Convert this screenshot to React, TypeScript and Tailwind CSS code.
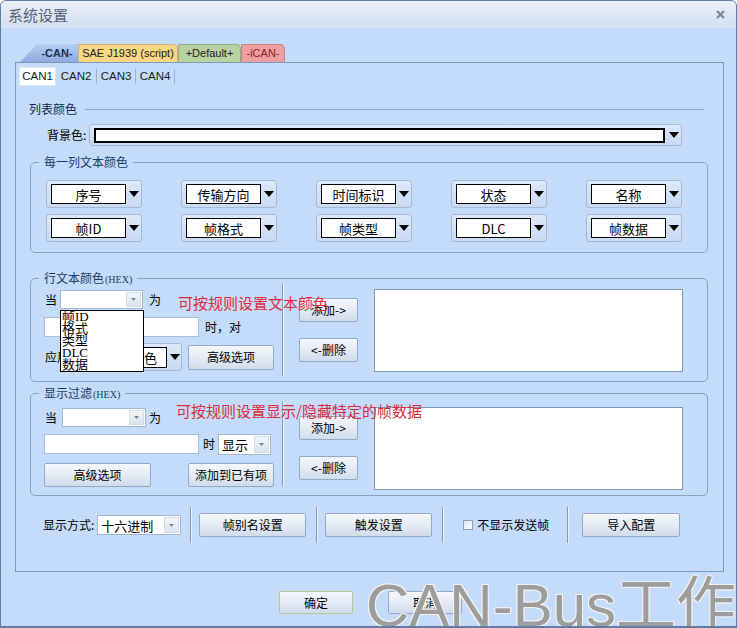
import React from "react";

function Arrow({ w = 10, h = 6, color = "#000" }: { w?: number; h?: number; color?: string }) {
  return (
    <svg width={w} height={h} viewBox={`0 0 ${w} ${h}`} className="shrink-0">
      <polygon points={`0,0 ${w},0 ${w / 2},${h}`} fill={color} />
    </svg>
  );
}

function Btn({ className = "", children }: { className?: string; children: React.ReactNode }) {
  return (
    <div
      className={`shrink-0 flex items-center justify-center border border-[#93aac7] rounded-[2px] bg-gradient-to-b from-[#f5f8fc] via-[#e4ebf4] to-[#d0dcec] text-[12px] leading-none text-black whitespace-nowrap ${className}`}
    >
      {children}
    </div>
  );
}

function ColorBtn({ label, className = "" }: { label: string; className?: string }) {
  return (
    <div
      className={`shrink-0 flex items-center h-[28px] w-[96px] border border-[#a6bad5] rounded-[3px] bg-gradient-to-b from-[#dde9f8] to-[#c8daf2] pl-[4px] ${className}`}
    >
      <div className="w-[75px] h-[20px] bg-white border border-black flex items-center justify-center text-[13px] leading-none">
        {label}
      </div>
      <div className="ml-[3px]">
        <Arrow w={10} h={6} />
      </div>
    </div>
  );
}

function Combo({ className = "", text = "" }: { className?: string; text?: string }) {
  return (
    <div className={`shrink-0 flex bg-white border border-[#a3b7d1] ${className}`}>
      <div className="flex-1 flex items-center pl-[3px] text-[13px] leading-none whitespace-nowrap overflow-hidden">{text}</div>
      <div className="w-[15px] m-[1px] flex items-center justify-center bg-gradient-to-b from-[#f3f6fa] to-[#d9e2ee] border border-[#d3dde9]">
        <Arrow w={5} h={3} color="#7d8796" />
      </div>
    </div>
  );
}

function Group({ title, hex, className = "", children }: { title: string; hex?: boolean; className?: string; children?: React.ReactNode }) {
  return (
    <div className={`relative shrink-0 ml-[14px] w-[678px] border border-[#8aa3c4] rounded-[5px] ${className}`}>
      <span className="absolute -top-[9px] left-[8px] px-[5px] bg-[#c4dcf9] text-[12px] leading-[16px] text-[#173a66] whitespace-nowrap">
        {title}
        {hex && <span className="font-['Liberation_Serif',serif] text-[10px] ml-[1px]">(HEX)</span>}
      </span>
      {children}
    </div>
  );
}

function VSep({ className = "" }: { className?: string }) {
  return <div className={`shrink-0 w-[2px] border-l border-[#8397b4] border-r border-r-[#e9f1fb] ${className}`} />;
}

function ListBox({ className = "" }: { className?: string }) {
  return <div className={`shrink-0 w-[309px] h-[83px] bg-white border border-[#7f98b8] ${className}`} />;
}

export default function App() {
  return (
    <div className="relative w-[737px] h-[628px] overflow-hidden bg-[#c4dcf9] border-x border-t border-b-2 border-[#5f7ea6] rounded-t-[6px] font-['Noto_Sans_CJK_SC',sans-serif] text-[12px] text-black">
      {/* Title bar */}
      <div className="h-[27px] flex items-center justify-between pl-[7px] pr-[11px] bg-gradient-to-b from-[#ebf0f8] to-[#d3dff0] border-b border-[#dde7f3]">
        <span className="text-[15px] leading-none text-[#56637a]">系统设置</span>
        <svg width="9" height="9" viewBox="0 0 9 9">
          <path d="M1 1L8 8M8 1L1 8" stroke="#75839a" strokeWidth="2" />
        </svg>
      </div>

      {/* Top tabs */}
      <div className="mt-[16px] ml-[19px] h-[18px] flex items-end font-['Liberation_Sans',sans-serif] text-[11px] leading-none">
        <div className="w-[58px] h-[18px] flex items-center justify-center pl-[16px] bg-gradient-to-b from-[#b6cff2] to-[#8cacdf] font-bold text-[#1b2d57] [clip-path:polygon(17px_0,100%_0,100%_100%,0_100%)]">
          -CAN-
        </div>
        <div className="w-[100px] h-[18px] flex items-center justify-center bg-[#f7d786] border border-b-0 border-[#cfb375] rounded-tr-[5px] text-[#222]">
          SAE J1939 (script)
        </div>
        <div className="w-[63px] h-[18px] flex items-center justify-center bg-[#b8d2a0] border border-b-0 border-[#93b07e] rounded-tr-[5px] text-[#222]">
          +Default+
        </div>
        <div className="w-[44px] h-[18px] flex items-center justify-center bg-[#eca0a2] border border-b-0 border-[#c98184] rounded-tr-[5px] text-[#8c1c20]">
          -iCAN-
        </div>
      </div>

      {/* Panel */}
      <div className="ml-[14px] w-[709px] h-[510px] border border-[#7b98c0] flex flex-col">
        {/* Sub tabs */}
        <div className="mt-[4px] ml-[3px] h-[19px] flex items-center font-['Liberation_Sans',sans-serif] text-[11.5px] leading-none text-[#1a1a1a]">
          <div className="w-[37px] h-[19px] bg-white border border-[#dfe7f1] flex items-center justify-center">CAN1</div>
          <div className="w-[40px] text-center">CAN2</div>
          <div className="w-px h-[15px] bg-[#9db1cb]" />
          <div className="w-[38px] text-center">CAN3</div>
          <div className="w-px h-[15px] bg-[#9db1cb]" />
          <div className="w-[38px] text-center">CAN4</div>
          <div className="w-px h-[15px] bg-[#9db1cb]" />
        </div>

        {/* 列表颜色 */}
        <div className="mt-[15px] h-[16px] flex items-center pl-[13px]">
          <span className="text-[12px] leading-none text-[#14294a]">列表颜色</span>
          <div className="flex-1 h-px bg-[#8ea8c5] ml-[8px] mr-[19px]" />
        </div>

        {/* 背景色 */}
        <div className="mt-[7px] h-[22px] flex items-center pl-[31px]">
          <span className="text-[12px] leading-none">背景色:</span>
          <div className="ml-[3px] w-[593px] h-[22px] flex items-center pl-[4px] border border-[#a6bad5] rounded-[3px] bg-gradient-to-b from-[#dde9f8] to-[#c8daf2]">
            <div className="w-[571px] h-[15px] bg-white border-2 border-black" />
            <div className="ml-[4px]">
              <Arrow w={10} h={6} />
            </div>
          </div>
        </div>

        {/* 每一列文本颜色 */}
        <Group title="每一列文本颜色" className="mt-[16px] h-[91px]">
          <div className="flex flex-col pt-[17px] pl-[15px] gap-[6px]">
            <div className="flex gap-[39px]">
              <ColorBtn label="序号" />
              <ColorBtn label="传输方向" />
              <ColorBtn label="时间标识" />
              <ColorBtn label="状态" />
              <ColorBtn label="名称" />
            </div>
            <div className="flex gap-[39px]">
              <ColorBtn label="帧ID" />
              <ColorBtn label="帧格式" />
              <ColorBtn label="帧类型" />
              <ColorBtn label="DLC" />
              <ColorBtn label="帧数据" />
            </div>
          </div>
        </Group>

        {/* 行文本颜色 */}
        <Group title="行文本颜色" hex className="mt-[25px] h-[104px] flex">
          <div className="w-[251px] shrink-0 flex flex-col pl-[13px] pt-[11px]">
            <div className="h-[19px] flex items-center">
              <span className="ml-[1px] shrink-0">当</span>
              <Combo className="ml-[3px] w-[83px] h-[19px]" />
              <span className="ml-[6px] shrink-0">为</span>
              <span className="relative z-10 ml-[17px] mt-[5px] shrink-0 whitespace-nowrap text-[15px] leading-none text-[#de2a3c]">
                可按规则设置文本颜色
              </span>
            </div>
            <div className="mt-[8px] h-[20px] flex items-center">
              <div className="shrink-0 w-[155px] h-[20px] bg-white border border-[#a9bdd6]" />
              <span className="ml-[6px] shrink-0 whitespace-nowrap">时，对</span>
            </div>
            <div className="mt-[6px] h-[28px] flex items-center">
              <span className="ml-[1px] shrink-0 whitespace-nowrap">应用到</span>
              <div className="ml-[15px] shrink-0 flex items-center h-[28px] w-[86px] border border-[#a6bad5] rounded-[3px] bg-gradient-to-b from-[#dde9f8] to-[#c8daf2] pl-[4px]">
                <div className="w-[66px] h-[21px] bg-white border border-black flex items-center justify-end pr-[9px] text-[13px] leading-none">
                  颜色
                </div>
                <div className="ml-[3px]">
                  <Arrow w={10} h={6} />
                </div>
              </div>
              <Btn className="ml-[6px] w-[86px] h-[25px]">高级选项</Btn>
            </div>
          </div>
          <VSep className="my-[5px]" />
          <div className="ml-[15px] w-[59px] shrink-0 flex flex-col pt-[19px] gap-[16px]">
            <Btn className="w-[59px] h-[24px]">添加-&gt;</Btn>
            <Btn className="w-[59px] h-[24px]">&lt;-删除</Btn>
          </div>
          <ListBox className="ml-[16px] mt-[10px]" />

          {/* Open dropdown list */}
          <div className="absolute left-[29px] top-[31px] w-[84px] h-[62px] bg-white border border-black z-20 flex flex-col pl-[1px] font-['Liberation_Serif','Noto_Sans_CJK_SC',serif] text-[13px] leading-[12px]">
            <span>帧ID</span>
            <span>格式</span>
            <span>类型</span>
            <span>DLC</span>
            <span>数据</span>
          </div>
        </Group>

        {/* 显示过滤 */}
        <Group title="显示过滤" hex className="mt-[11px] h-[103px] flex">
          <div className="w-[251px] shrink-0 flex flex-col pl-[13px] pt-[14px]">
            <div className="h-[19px] flex items-center">
              <span className="ml-[1px] shrink-0">当</span>
              <Combo className="ml-[5px] w-[84px] h-[19px]" />
              <span className="ml-[3px] shrink-0">为</span>
              <span className="relative z-10 ml-[15px] -mt-[14px] shrink-0 whitespace-nowrap text-[15px] leading-none text-[#de2a3c]">
                可按规则设置显示/隐藏特定的帧数据
              </span>
            </div>
            <div className="mt-[6px] h-[22px] flex items-center">
              <div className="shrink-0 w-[155px] h-[20px] bg-white border border-[#a9bdd6]" />
              <span className="ml-[4px] shrink-0">时</span>
              <Combo className="ml-[3px] w-[53px] h-[21px]" text="显示" />
            </div>
            <div className="mt-[8px] h-[24px] flex items-center">
              <Btn className="w-[107px] h-[24px]">高级选项</Btn>
              <Btn className="ml-[37px] w-[86px] h-[24px]">添加到已有项</Btn>
            </div>
          </div>
          <VSep className="my-[8px]" />
          <div className="ml-[15px] w-[59px] shrink-0 flex flex-col pt-[22px] gap-[16px]">
            <Btn className="w-[59px] h-[24px]">添加-&gt;</Btn>
            <Btn className="w-[59px] h-[24px]">&lt;-删除</Btn>
          </div>
          <ListBox className="ml-[16px] mt-[13px]" />
        </Group>

        {/* Bottom bar */}
        <div className="mt-[11px] h-[36px] flex items-center pl-[27px]">
          <span className="shrink-0 whitespace-nowrap">显示方式:</span>
          <Combo className="ml-[3px] w-[84px] h-[20px]" text="十六进制" />
          <VSep className="ml-[9px] h-[36px]" />
          <Btn className="ml-[7px] w-[107px] h-[24px]">帧别名设置</Btn>
          <VSep className="ml-[10px] h-[36px]" />
          <Btn className="ml-[7px] w-[107px] h-[24px]">触发设置</Btn>
          <VSep className="ml-[10px] h-[36px]" />
          <div className="ml-[19px] shrink-0 w-[10px] h-[10px] border border-[#8aa0bd] bg-gradient-to-br from-[#dfe6ef] to-[#fbfcfe]" />
          <span className="ml-[4px] shrink-0 whitespace-nowrap">不显示发送帧</span>
          <VSep className="ml-[18px] h-[36px]" />
          <Btn className="ml-[13px] w-[98px] h-[24px]">导入配置</Btn>
        </div>
      </div>

      {/* Footer buttons */}
      <div className="mt-[19px] ml-[278px] flex gap-[35px]">
        <Btn className="w-[74px] h-[23px] border-[#b7c98c]">确定</Btn>
        <Btn className="w-[74px] h-[23px]">取消</Btn>
      </div>

      {/* Watermark */}
      <div className="absolute left-[365px] top-[575px] z-30 whitespace-nowrap font-['Liberation_Sans','Noto_Sans_CJK_SC',sans-serif] text-[60px] leading-none text-[#9d9d9d] [text-shadow:1px_1px_0_#f2f2f2,-1px_-1px_0_#f2f2f2,1px_-1px_0_#f2f2f2,-1px_1px_0_#f2f2f2]">
        CAN-Bus工作室
      </div>
    </div>
  );
}
